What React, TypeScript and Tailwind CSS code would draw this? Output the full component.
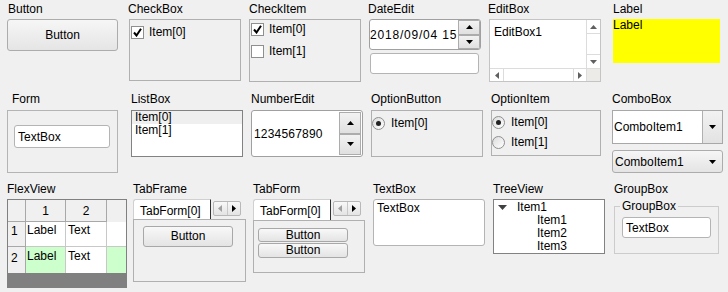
import React from "react";

const Caption = ({ children, className = "" }: { children: React.ReactNode; className?: string }) => (
  <div className={"h-[19px] pt-[2px] leading-[14px] whitespace-nowrap " + className}>{children}</div>
);

const Up = ({ color = "#000" }: { color?: string }) => (
  <svg width="7" height="4" viewBox="0 0 7 4"><path d="M0 4 L3.5 0 L7 4Z" fill={color} /></svg>
);
const Down = ({ color = "#000" }: { color?: string }) => (
  <svg width="7" height="4" viewBox="0 0 7 4"><path d="M0 0 L3.5 4 L7 0Z" fill={color} /></svg>
);
const Left = ({ color = "#000" }: { color?: string }) => (
  <svg width="4" height="7" viewBox="0 0 4 7"><path d="M4 0 L0 3.5 L4 7Z" fill={color} /></svg>
);
const Right = ({ color = "#000" }: { color?: string }) => (
  <svg width="4" height="7" viewBox="0 0 4 7"><path d="M0 0 L4 3.5 L0 7Z" fill={color} /></svg>
);

const Check = ({ checked }: { checked?: boolean }) => (
  <span className="w-[13px] h-[13px] border border-[#8e8f8f] bg-white flex items-center justify-center shrink-0">
    {checked && (
      <svg width="9" height="9" viewBox="0 0 9 9">
        <path d="M1 4.5 L3.5 7.5 L8 0.8" stroke="#000" strokeWidth="2" fill="none" />
      </svg>
    )}
  </span>
);

const Radio = ({ on }: { on?: boolean }) => (
  <span className="w-[13px] h-[13px] rounded-full border border-[#8e8f8f] bg-linear-to-br from-[#dcdcdc] to-white flex items-center justify-center shrink-0">
    {on && <span className="w-[5px] h-[5px] rounded-full bg-[#222]" />}
  </span>
);

const SpinBtn = ({ children }: { children: React.ReactNode }) => (
  <div className="flex-1 border border-[#acacac] bg-linear-to-b from-[#f2f2f2] to-[#e0e0e0] flex items-center justify-center">
    {children}
  </div>
);

const Spinner = ({ className = "" }: { className?: string }) => (
  <div className={"flex flex-col w-[22px] self-stretch " + className}>
    <SpinBtn><Up /></SpinBtn>
    <SpinBtn><Down /></SpinBtn>
  </div>
);

const TabArrows = () => (
  <div className="mt-[2px] ml-[2px] w-[28px] h-[15px] rounded-[2px] border border-[#b8b8b8] bg-linear-to-b from-[#f8f8f8] to-[#e4e4e4] flex">
    <div className="flex-1 flex items-center justify-center border-r border-[#c8c8c8]"><Left color="#a0a0a0" /></div>
    <div className="flex-1 flex items-center justify-center"><Right /></div>
  </div>
);

const TabHead = ({ h }: { h: string }) => (
  <div className={"flex " + h}>
    <div className="w-[78px] h-full bg-white border-t border-l border-[#d0d0d0] rounded-tl-[3px] border-r-[1px] border-r-[#333] pl-[6px] pt-[4px] leading-[14px] whitespace-nowrap">
      TabForm[0]
    </div>
    <TabArrows />
  </div>
);

const SmallBtn = ({ className = "" }: { className?: string }) => (
  <div className={"rounded-[3px] border border-[#a8a8a8] bg-linear-to-b from-[#f8f8f8] to-[#e4e4e4] flex items-center justify-center leading-[13px] " + className}>
    Button
  </div>
);

export default function App() {
  return (
    <div className="w-[728px] h-[292px] bg-[#f0f0f0] overflow-hidden text-[12px] leading-[14px] text-black font-['Liberation_Sans',Arial,sans-serif]">
      {/* Row 1 */}
      <div className="flex h-[90px] pl-[7px]">
        <div className="w-[122px] flex flex-col">
          <Caption className="pl-[1px]">Button</Caption>
          <div className="w-[111px] h-[32px] rounded-[3px] border border-[#acacac] bg-linear-to-b from-[#f6f6f6] to-[#e5e5e5] flex items-center justify-center">
            Button
          </div>
        </div>
        <div className="w-[120px] flex flex-col">
          <Caption className="-ml-[1px]">CheckBox</Caption>
          <div className="w-[112px] h-[62px] border border-[#b0b0b0] pl-[1px] pt-[5px]">
            <div className="flex items-center gap-[5px]">
              <Check checked />
              <span>Item[0]</span>
            </div>
          </div>
        </div>
        <div className="w-[120px] flex flex-col">
          <Caption>CheckItem</Caption>
          <div className="w-[112px] h-[63px] border border-[#b0b0b0] pl-[1px] pt-[2px] flex flex-col gap-[8px]">
            <div className="flex items-center gap-[5px]">
              <Check checked />
              <span>Item[0]</span>
            </div>
            <div className="flex items-center gap-[5px]">
              <Check />
              <span>Item[1]</span>
            </div>
          </div>
        </div>
        <div className="w-[120px] flex flex-col">
          <Caption className="-ml-[1px]">DateEdit</Caption>
          <div className="w-[112px] h-[31px] rounded-[3px] border border-[#a0a0a0] bg-white flex items-center overflow-hidden">
            <span className="flex-1 whitespace-nowrap overflow-hidden tracking-[0.8px]">2018/09/04 15</span>
            <Spinner />
          </div>
          <div className="mt-[3px] ml-[1px] w-[109px] h-[21px] rounded-[3px] border border-[#b4b4b4] bg-white" />
        </div>
        <div className="w-[124px] flex flex-col">
          <Caption className="-ml-[1px]">EditBox</Caption>
          <div className="w-[112px] h-[63px] border border-[#c4c4c4] bg-white flex flex-col">
            <div className="flex flex-1 min-h-0">
              <div className="flex-1 pl-[4px] pt-[5px]">EditBox1</div>
              <div className="w-[14px] border-l border-[#dcdcdc] flex flex-col">
                <div className="h-[14px] border-b border-[#dcdcdc] flex items-center justify-center"><Up color="#606060" /></div>
                <div className="flex-1" />
                <div className="h-[14px] border-t border-[#dcdcdc] flex items-center justify-center"><Down color="#606060" /></div>
              </div>
            </div>
            <div className="h-[13px] flex border-t border-[#dcdcdc]">
              <div className="w-[14px] border-r border-[#dcdcdc] flex items-center justify-center"><Left color="#606060" /></div>
              <div className="flex-1" />
              <div className="w-[14px] border-l border-r border-[#dcdcdc] flex items-center justify-center"><Right color="#606060" /></div>
              <div className="w-[13px] bg-[#ecebe8]" />
            </div>
          </div>
        </div>
        <div className="flex flex-col">
          <Caption>Label</Caption>
          <div className="w-[107px] h-[44px] bg-[#ffff00] leading-[12px]">Label</div>
        </div>
      </div>

      {/* Row 2 */}
      <div className="flex h-[90px] pl-[7px]">
        <div className="w-[124px] flex flex-col">
          <Caption className="h-[20px] pl-[5px]">Form</Caption>
          <div className="w-[111px] h-[63px] border border-[#b4b4b4] pl-[6px] pt-[14px]">
            <div className="w-[96px] h-[23px] rounded-[3px] border border-[#b4b4b4] bg-white flex items-center pl-[3px]">TextBox</div>
          </div>
        </div>
        <div className="w-[120px] flex flex-col">
          <Caption className="h-[20px]">ListBox</Caption>
          <div className="w-[112px] h-[47px] border border-[#828282] bg-white leading-[13px]">
            <div className="h-[13px] bg-[#efefef] pl-[3px]">Item[0]</div>
            <div className="h-[13px] pl-[3px]">Item[1]</div>
          </div>
        </div>
        <div className="w-[120px] flex flex-col">
          <Caption className="h-[20px]">NumberEdit</Caption>
          <div className="w-[112px] h-[47px] rounded-[3px] border border-[#a0a0a0] bg-white flex items-center">
            <span className="flex-1 pl-[2px] tracking-[0.2px]">1234567890</span>
            <Spinner className="my-[1px] mr-[1px]" />
          </div>
        </div>
        <div className="w-[120px] flex flex-col">
          <Caption className="h-[20px]">OptionButton</Caption>
          <div className="w-[112px] h-[47px] border border-[#b0b0b0] pt-[5px]">
            <div className="flex items-center gap-[6px]">
              <Radio on />
              <span>Item[0]</span>
            </div>
          </div>
        </div>
        <div className="w-[121px] flex flex-col">
          <Caption className="h-[20px]">OptionItem</Caption>
          <div className="w-[110px] h-[46px] border border-[#b0b0b0] pt-[4px] flex flex-col gap-[6px]">
            <div className="flex items-center gap-[6px]">
              <Radio on />
              <span>Item[0]</span>
            </div>
            <div className="flex items-center gap-[6px]">
              <Radio />
              <span>Item[1]</span>
            </div>
          </div>
        </div>
        <div className="flex flex-col">
          <Caption className="h-[20px]">ComboBox</Caption>
          <div className="w-[111px] h-[34px] border border-[#a8a8a8] bg-white flex">
            <span className="flex-1 flex items-center pl-[1px]">ComboItem1</span>
            <div className="w-[20px] border-l border-[#b0b0b0] bg-linear-to-b from-[#f2f2f2] to-[#e2e2e2] flex items-center justify-center">
              <Down />
            </div>
          </div>
          <div className="mt-[6px] w-[111px] h-[23px] rounded-[3px] border border-[#acacac] bg-linear-to-b from-[#f6f6f6] to-[#e4e4e4] flex items-center pl-[2px] pr-[6px]">
            <span className="flex-1">ComboItem1</span>
            <Down />
          </div>
        </div>
      </div>

      {/* Row 3 */}
      <div className="flex h-[112px] pl-[7px]">
        <div className="w-[126px] flex flex-col">
          <Caption className="h-[18px]">FlexView</Caption>
          <div className="w-[120px] h-[89px] bg-[#808080] pt-[1px] px-[1px]">
            <div className="grid grid-cols-[18px_40px_41px_19px] grid-rows-[22px_25px_26px] bg-white">
              <div className="bg-[#f0f0f0] border-r border-b border-[#a8a8a8]" />
              <div className="bg-[#f0f0f0] border-r border-b border-[#a8a8a8] flex items-center justify-center">1</div>
              <div className="bg-[#f0f0f0] border-r border-b border-[#a8a8a8] flex items-center justify-center">2</div>
              <div className="bg-[#f0f0f0]" />
              <div className="bg-[#f0f0f0] border-r border-b border-[#a8a8a8] pt-[2px] pl-[3px]">1</div>
              <div className="border-r border-b border-[#c8c8c8] pl-[1px] pt-[1px]">Label</div>
              <div className="border-r border-b border-[#c8c8c8] pl-[2px] pt-[1px]">Text</div>
              <div className="border-b border-[#c8c8c8]" />
              <div className="bg-[#f0f0f0] border-r border-[#a8a8a8] pt-[4px] pl-[3px]">2</div>
              <div className="bg-[#ccffcc] border-r border-[#c8c8c8] pl-[1px] pt-[2px]">Label</div>
              <div className="border-r border-[#c8c8c8] pl-[2px] pt-[2px]">Text</div>
              <div className="bg-[#ccffcc]" />
            </div>
          </div>
        </div>
        <div className="w-[120px] flex flex-col">
          <Caption className="h-[19px]">TabFrame</Caption>
          <TabHead h="h-[20px]" />
          <div className="w-[113px] h-[63px] border border-[#b0b0b0] pl-[9px] pt-[6px]">
            <SmallBtn className="w-[90px] h-[21px]" />
          </div>
        </div>
        <div className="w-[120px] flex flex-col">
          <Caption className="h-[19px]">TabForm</Caption>
          <TabHead h="h-[21px]" />
          <div className="w-[112px] h-[53px] border border-[#b0b0b0] pl-[4px] pt-[7px] flex flex-col gap-[1px]">
            <SmallBtn className="w-[90px] h-[14px]" />
            <SmallBtn className="w-[90px] h-[15px]" />
          </div>
        </div>
        <div className="w-[120px] flex flex-col">
          <Caption className="h-[19px]">TextBox</Caption>
          <div className="w-[112px] h-[47px] rounded-[3px] border border-[#b4b4b4] bg-white pl-[3px] pt-[1px]">TextBox</div>
        </div>
        <div className="w-[121px] flex flex-col">
          <Caption className="h-[19px]">TreeView</Caption>
          <div className="w-[112px] h-[55px] border border-[#828282] bg-white leading-[13px] pt-[1px]">
            <div className="flex items-center pl-[4px]">
              <svg width="9" height="5" viewBox="0 0 9 5"><path d="M0 0 L9 0 L4.5 5Z" fill="#404040" /></svg>
              <span className="ml-[10px]">Item1</span>
            </div>
            <div className="pl-[43px]">Item1</div>
            <div className="pl-[43px]">Item2</div>
            <div className="pl-[43px]">Item3</div>
          </div>
        </div>
        <div className="flex flex-col">
          <Caption className="h-[18px]">GroupBox</Caption>
          <fieldset className="w-[105px] h-[55px] border border-[#cccccc] pl-[7px]">
            <legend className="ml-[-2px] px-[2px] leading-[14px]">GroupBox</legend>
            <div className="mt-[4px] w-[89px] h-[21px] rounded-[3px] border border-[#b4b4b4] bg-white flex items-center pl-[3px]">TextBox</div>
          </fieldset>
        </div>
      </div>
    </div>
  );
}
